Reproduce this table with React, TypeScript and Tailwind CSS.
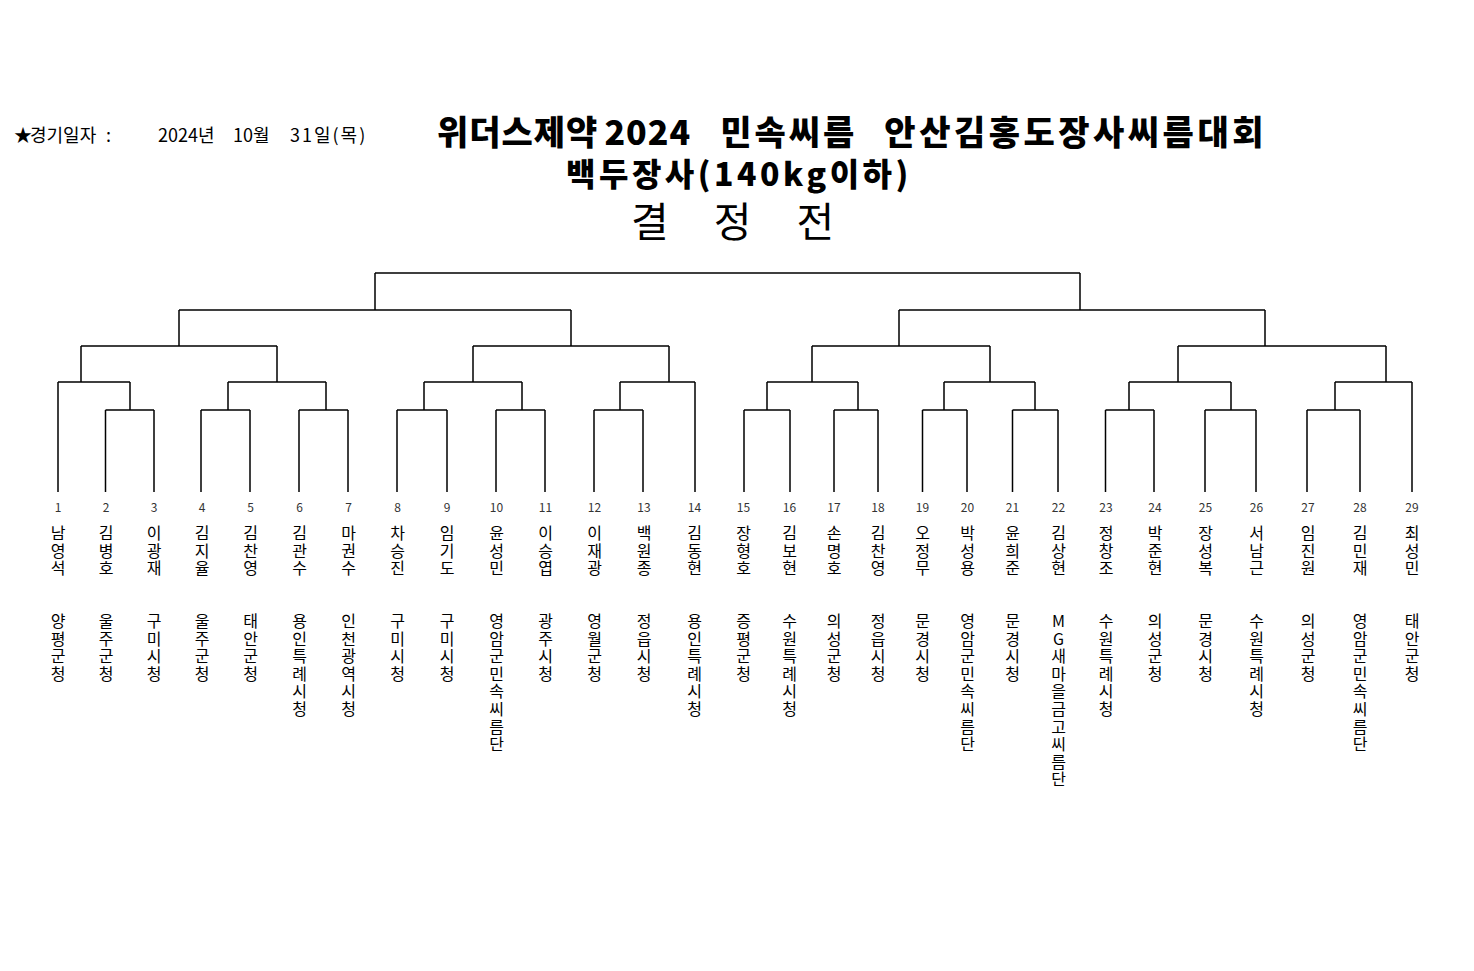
const players = [
  { n: 1, name: "남영석", team: "양평군청" },
  { n: 2, name: "김병호", team: "울주군청" },
  { n: 3, name: "이광재", team: "구미시청" },
  { n: 4, name: "김지율", team: "울주군청" },
  { n: 5, name: "김찬영", team: "태안군청" },
  { n: 6, name: "김관수", team: "용인특례시청" },
  { n: 7, name: "마권수", team: "인천광역시청" },
  { n: 8, name: "차승진", team: "구미시청" },
  { n: 9, name: "임기도", team: "구미시청" },
  { n: 10, name: "윤성민", team: "영암군민속씨름단" },
  { n: 11, name: "이승엽", team: "광주시청" },
  { n: 12, name: "이재광", team: "영월군청" },
  { n: 13, name: "백원종", team: "정읍시청" },
  { n: 14, name: "김동현", team: "용인특례시청" },
  { n: 15, name: "장형호", team: "증평군청" },
  { n: 16, name: "김보현", team: "수원특례시청" },
  { n: 17, name: "손명호", team: "의성군청" },
  { n: 18, name: "김찬영", team: "정읍시청" },
  { n: 19, name: "오정무", team: "문경시청" },
  { n: 20, name: "박성용", team: "영암군민속씨름단" },
  { n: 21, name: "윤희준", team: "문경시청" },
  { n: 22, name: "김상현", team: "MG새마을금고씨름단" },
  { n: 23, name: "정창조", team: "수원특례시청" },
  { n: 24, name: "박준현", team: "의성군청" },
  { n: 25, name: "장성복", team: "문경시청" },
  { n: 26, name: "서남근", team: "수원특례시청" },
  { n: 27, name: "임진원", team: "의성군청" },
  { n: 28, name: "김민재", team: "영암군민속씨름단" },
  { n: 29, name: "최성민", team: "태안군청" },
]

// bracket levels (svg local y)
const L1 = 13
const L2 = 50
const L3 = 86
const L4 = 122
const L5 = 150
const B = 232

// [y, left, right, up-x, up-to-y]
const joins: [number, number, number, number, number][] = [
  // first round pairs
  [L5, 105.5, 154, 130, L4],
  [L5, 201, 250, 228, L4],
  [L5, 299, 348, 326, L4],
  [L5, 397, 447, 424, L4],
  [L5, 496, 545, 522, L4],
  [L5, 594, 643, 620, L4],
  [L5, 744, 790, 767, L4],
  [L5, 834, 878, 858, L4],
  [L5, 922.5, 967, 944, L4],
  [L5, 1012.5, 1058, 1035, L4],
  [L5, 1105.5, 1154, 1129, L4],
  [L5, 1205, 1256, 1231, L4],
  [L5, 1307, 1360, 1335, L4],
  // second round
  [L4, 58, 130, 81, L3],
  [L4, 228, 326, 277, L3],
  [L4, 424, 522, 473, L3],
  [L4, 620, 695, 669, L3],
  [L4, 767, 858, 812, L3],
  [L4, 944, 1035, 990, L3],
  [L4, 1129, 1231, 1178, L3],
  [L4, 1335, 1412, 1386, L3],
  // quarter
  [L3, 81, 277, 179, L2],
  [L3, 473, 669, 571, L2],
  [L3, 812, 990, 899, L2],
  [L3, 1178, 1386, 1265, L2],
  // semi
  [L2, 179, 571, 375, L1],
  [L2, 899, 1265, 1080, L1],
]

// leaves: [x, top]
const leaves: [number, number][] = [
  [58, L4], [105.5, L5], [154, L5], [201, L5], [250, L5], [299, L5], [348, L5],
  [397, L5], [447, L5], [496, L5], [545, L5], [594, L5], [643, L5], [695, L4],
  [744, L5], [790, L5], [834, L5], [878, L5], [922.5, L5], [967, L5], [1012.5, L5],
  [1058, L5], [1105.5, L5], [1154, L5], [1205, L5], [1256, L5], [1307, L5], [1360, L5],
  [1412, L4],
]

function bracketPath() {
  let d = `M375 ${L1} H1080 `
  for (const [y, a, b, m, up] of joins) {
    d += `M${a} ${y} H${b} M${m} ${y} V${up} `
  }
  for (const [x, top] of leaves) {
    d += `M${x} ${top} V${B} `
  }
  return d
}

export default function App() {
  return (
    <div className="w-[1474px] h-[971px] bg-white text-black font-['Noto_Sans_CJK_KR',sans-serif] pt-[114px] overflow-hidden">
      <div className="flex items-start">
        <div className="w-[437px] pl-[14px] mt-[11px] flex text-[18px] leading-[18px] whitespace-nowrap">
          <span className="w-[16px]">★</span>
          <span className="w-[76px]">경기일자</span>
          <span className="w-[52px]">:</span>
          <span className="w-[75px]">2024년</span>
          <span className="w-[57px]">10월</span>
          <span className="tracking-[2px]">31일(목)</span>
        </div>
        <div className="flex items-baseline text-[34px] leading-[34px] font-black whitespace-nowrap">
          <span className="tracking-[1px]">위더스제약</span>
          <span className="ml-[6px] tracking-[1px]">2024</span>
          <span className="ml-[29px] tracking-[3px]">민속씨름</span>
          <span className="ml-[27px] tracking-[3.5px]">안산김홍도장사씨름대회</span>
        </div>
      </div>

      <div className="mt-[8px] pl-[566px] text-[32px] leading-[32px] font-black tracking-[3.5px] whitespace-nowrap">
        백두장사(140kg이하)
      </div>

      <div className="mt-[11px] pl-[631px] flex gap-[45px] text-[41px] leading-[40px]">
        <span>결</span>
        <span>정</span>
        <span>전</span>
      </div>

      <svg className="mt-[21px] block" width="1474" height="240" viewBox="0 0 1474 240">
        <path d={bracketPath()} fill="none" stroke="#000" strokeWidth="1.5" />
      </svg>

      <div className="grid grid-cols-[48px_48px_48px_48px_49px_49px_49px_49px_50px_49px_49px_49px_50px_51px_47px_45px_44px_44px_45px_45px_45px_47px_48px_50px_51px_51px_52px_52px_52px] pl-[34px]">
        {players.map((p) => (
          <div key={p.n} className="flex flex-col items-center">
            <div className="h-[14px] text-[12px] leading-[14px] text-[#333]">{p.n}</div>
            <div className="mt-[10px] h-[88px] w-[17px] break-all text-center text-[16px] leading-[17.6px]">
              {p.name}
            </div>
            <div className="w-[17px] break-all text-center text-[16px] leading-[17.6px]">{p.team}</div>
          </div>
        ))}
      </div>
    </div>
  )
}
